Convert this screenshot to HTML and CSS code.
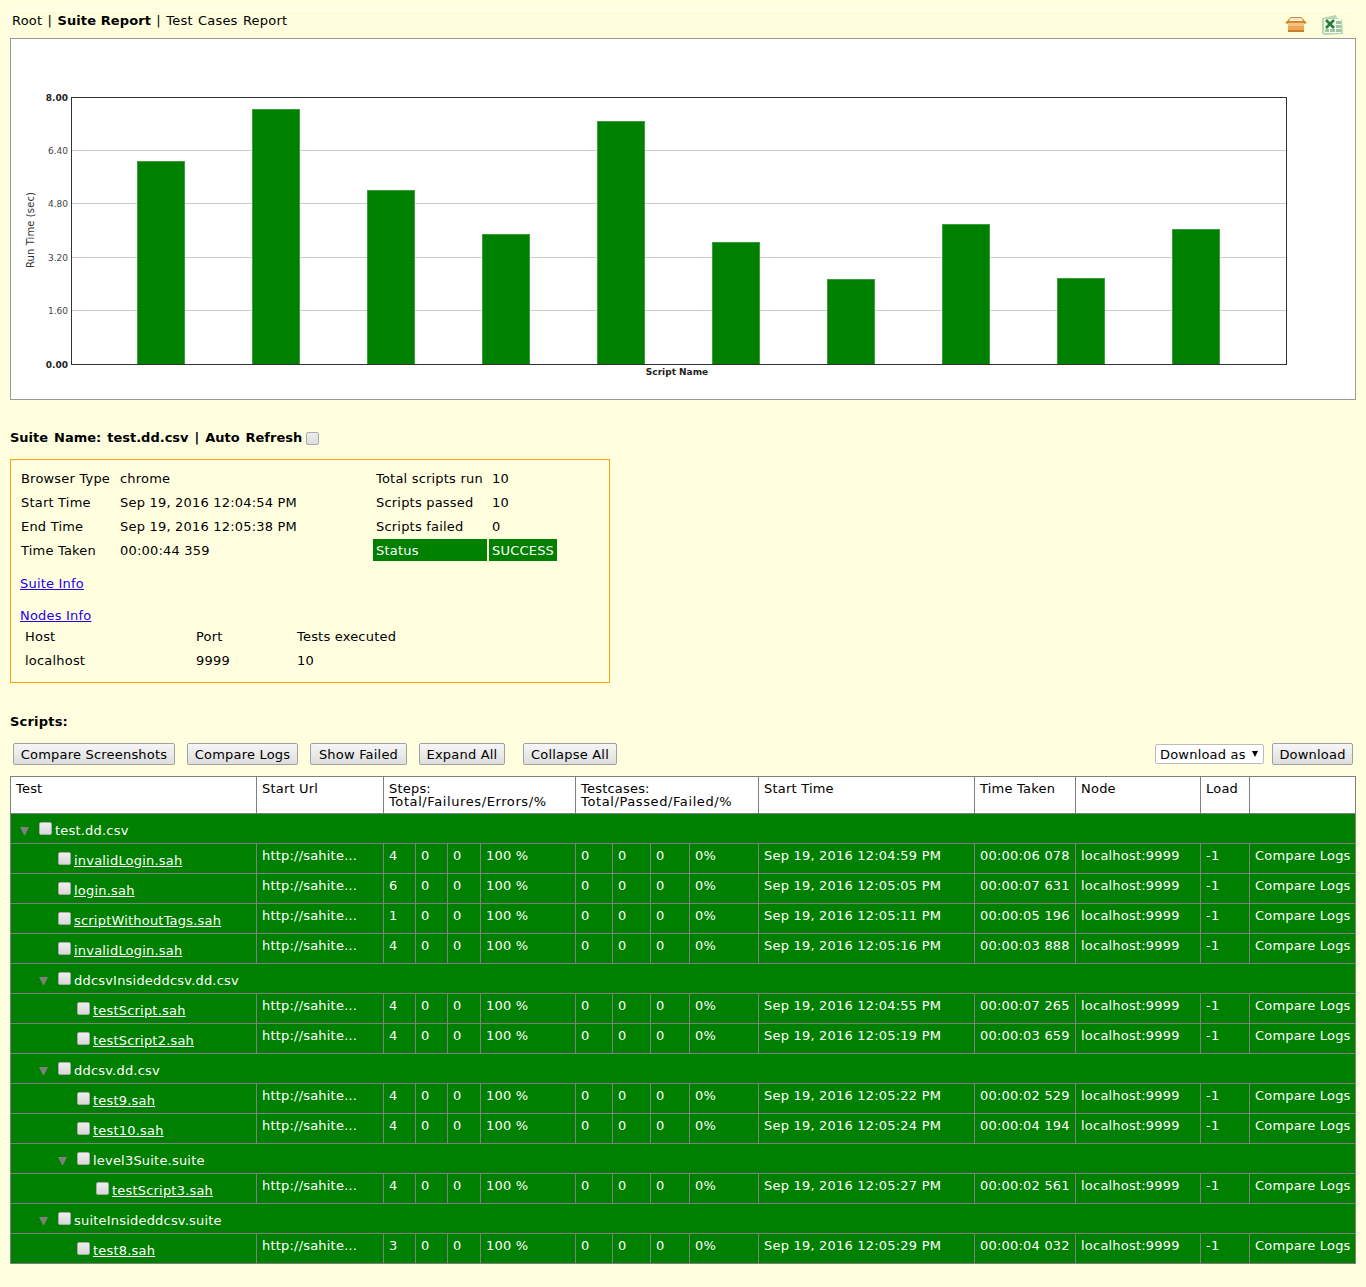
FILE: index.html
```html
<!DOCTYPE html>
<html lang="en">
<head>
  <meta charset="UTF-8">
  <title>Suite Report</title>
  <link rel="stylesheet" href="styles.css">
</head>
<body>

<div class="topbar">
  <div class="crumbs">Root | <b>Suite Report</b> | Test Cases Report</div>
  <div class="export-icons">
    <svg width="24" height="18" viewBox="0 0 24 18">
      <path d="M4 5 L1 8 L4 9 H20 L23 8 L20 5 L17 2 H7 Z" fill="#d08a2a"/>
      <path d="M7 3 H17 L19 6 H5 Z" fill="#f4ecd8"/>
      <rect x="4" y="8" width="16" height="9" rx="1" fill="#eda558"/>
      <rect x="4" y="8" width="16" height="3" fill="#f5c382"/>
      <rect x="4" y="15" width="16" height="2" fill="#c57f35"/>
    </svg>
    <svg width="22" height="20" viewBox="0 0 22 20">
      <path d="M1 3 L15 0 L16 3 L21 5 L22 19 L3 20 L1 18 Z" fill="#b7d5b2"/>
      <rect x="3" y="4" width="17" height="14" fill="#f4f9f2"/>
      <path d="M15 6 H20 V9 H15 Z M15 10 H20 V13 H15 Z M15 14 H20 V17 H15 Z M9 14 H14 V17 H9 Z M4 14 H8 V17 H4 Z" fill="#9cc79a"/>
      <path d="M5 5 L13 13 M13 5 L5 13" stroke="#2b7a35" stroke-width="2.6"/>
    </svg>
  </div>
</div>

<div class="chart-box">
  <svg class="chart" width="1344" height="360" viewBox="11 39 1344 360">
    <g class="grid">
      <line x1="72" x2="1286" y1="150.5" y2="150.5"/>
      <line x1="72" x2="1286" y1="203.5" y2="203.5"/>
      <line x1="72" x2="1286" y1="257.5" y2="257.5"/>
      <line x1="72" x2="1286" y1="310.5" y2="310.5"/>
    </g>
    <g class="bars">
      <rect x="137.5" y="161.5" width="47" height="203"/>
      <rect x="252.5" y="109.5" width="47" height="255"/>
      <rect x="367.5" y="190.5" width="47" height="174"/>
      <rect x="482.5" y="234.5" width="47" height="130"/>
      <rect x="597.5" y="121.5" width="47" height="243"/>
      <rect x="712.5" y="242.5" width="47" height="122"/>
      <rect x="827.5" y="279.5" width="47" height="85"/>
      <rect x="942.5" y="224.5" width="47" height="140"/>
      <rect x="1057.5" y="278.5" width="47" height="86"/>
      <rect x="1172.5" y="229.5" width="47" height="135"/>
    </g>
    <rect class="plot" x="71.5" y="97.5" width="1215" height="267"/>
    <g class="ticks">
      <text class="strong" x="68" y="101">8.00</text>
      <text x="68" y="154">6.40</text>
      <text x="68" y="207">4.80</text>
      <text x="68" y="261">3.20</text>
      <text x="68" y="314">1.60</text>
      <text class="strong" x="68" y="368">0.00</text>
    </g>
    <text class="y-title" transform="translate(34 230) rotate(-90)">Run Time (sec)</text>
    <text class="x-title" x="677" y="375">Script Name</text>
  </svg>
</div>

<h2 class="suite-name">Suite Name: test.dd.csv | Auto Refresh <input type="checkbox" class="check"></h2>

<div class="info-box">
  <div class="info-top">
    <table class="info-table run-table">
      <tr><td class="lbl">Browser Type</td><td>chrome</td></tr>
      <tr><td class="lbl">Start Time</td><td>Sep 19, 2016 12:04:54 PM</td></tr>
      <tr><td class="lbl">End Time</td><td>Sep 19, 2016 12:05:38 PM</td></tr>
      <tr><td class="lbl">Time Taken</td><td>00:00:44 359</td></tr>
    </table>
    <table class="info-table count-table">
      <tr><td class="lbl">Total scripts run</td><td>10</td></tr>
      <tr><td class="lbl">Scripts passed</td><td>10</td></tr>
      <tr><td class="lbl">Scripts failed</td><td>0</td></tr>
      <tr class="status"><td class="lbl">Status</td><td>SUCCESS</td></tr>
    </table>
  </div>
  <a class="info-link first" href="#">Suite Info</a>
  <a class="info-link" href="#">Nodes Info</a>
  <table class="info-table nodes-table">
    <tr><td class="host">Host</td><td class="port">Port</td><td>Tests executed</td></tr>
    <tr><td class="host">localhost</td><td class="port">9999</td><td>10</td></tr>
  </table>
</div>

<h2 class="scripts-title">Scripts:</h2>

<div class="toolbar">
  <div class="actions">
    <button class="btn-screens">Compare Screenshots</button>
    <button class="btn-logs">Compare Logs</button>
    <button class="btn-failed">Show Failed</button>
    <button class="btn-expand">Expand All</button>
    <button class="btn-collapse">Collapse All</button>
  </div>
  <div class="downloads">
    <div class="select-wrap"><select><option>Download as</option></select></div>
    <button class="btn-download">Download</button>
  </div>
</div>

<table class="report">
  <colgroup>
    <col class="c-test"><col class="c-url"><col class="c-n"><col class="c-n"><col class="c-n3"><col class="c-pct">
    <col class="c-t1"><col class="c-t2"><col class="c-t3"><col class="c-t4">
    <col class="c-start"><col class="c-taken"><col class="c-node"><col class="c-load"><col class="c-logs">
  </colgroup>
  <thead>
    <tr>
      <th>Test</th>
      <th>Start Url</th>
      <th colspan="4">Steps:<br><span class="fractions">Total/Failures/Errors/%</span></th>
      <th colspan="4">Testcases:<br><span class="fractions">Total/Passed/Failed/%</span></th>
      <th>Start Time</th>
      <th>Time Taken</th>
      <th>Node</th>
      <th>Load</th>
      <th></th>
    </tr>
  </thead>
  <tbody>
    <tr><td colspan="15" class="name"><span class="tree lvl-0"><i class="toggle"></i><input type="checkbox" class="check"><span>test.dd.csv</span></span></td></tr>
    <tr>
      <td class="name"><span class="tree lvl-1"><i class="spacer"></i><input type="checkbox" class="check"><a href="#">invalidLogin.sah</a></span></td>
      <td>http://sahite…</td><td>4</td><td>0</td><td>0</td><td>100 %</td><td>0</td><td>0</td><td>0</td><td>0%</td>
      <td>Sep 19, 2016 12:04:59 PM</td><td>00:00:06 078</td><td>localhost:9999</td><td>-1</td><td>Compare Logs</td>
    </tr>
    <tr>
      <td class="name"><span class="tree lvl-1"><i class="spacer"></i><input type="checkbox" class="check"><a href="#">login.sah</a></span></td>
      <td>http://sahite…</td><td>6</td><td>0</td><td>0</td><td>100 %</td><td>0</td><td>0</td><td>0</td><td>0%</td>
      <td>Sep 19, 2016 12:05:05 PM</td><td>00:00:07 631</td><td>localhost:9999</td><td>-1</td><td>Compare Logs</td>
    </tr>
    <tr>
      <td class="name"><span class="tree lvl-1"><i class="spacer"></i><input type="checkbox" class="check"><a href="#">scriptWithoutTags.sah</a></span></td>
      <td>http://sahite…</td><td>1</td><td>0</td><td>0</td><td>100 %</td><td>0</td><td>0</td><td>0</td><td>0%</td>
      <td>Sep 19, 2016 12:05:11 PM</td><td>00:00:05 196</td><td>localhost:9999</td><td>-1</td><td>Compare Logs</td>
    </tr>
    <tr>
      <td class="name"><span class="tree lvl-1"><i class="spacer"></i><input type="checkbox" class="check"><a href="#">invalidLogin.sah</a></span></td>
      <td>http://sahite…</td><td>4</td><td>0</td><td>0</td><td>100 %</td><td>0</td><td>0</td><td>0</td><td>0%</td>
      <td>Sep 19, 2016 12:05:16 PM</td><td>00:00:03 888</td><td>localhost:9999</td><td>-1</td><td>Compare Logs</td>
    </tr>
    <tr><td colspan="15" class="name"><span class="tree lvl-1"><i class="toggle"></i><input type="checkbox" class="check"><span>ddcsvInsideddcsv.dd.csv</span></span></td></tr>
    <tr>
      <td class="name"><span class="tree lvl-2"><i class="spacer"></i><input type="checkbox" class="check"><a href="#">testScript.sah</a></span></td>
      <td>http://sahite…</td><td>4</td><td>0</td><td>0</td><td>100 %</td><td>0</td><td>0</td><td>0</td><td>0%</td>
      <td>Sep 19, 2016 12:04:55 PM</td><td>00:00:07 265</td><td>localhost:9999</td><td>-1</td><td>Compare Logs</td>
    </tr>
    <tr>
      <td class="name"><span class="tree lvl-2"><i class="spacer"></i><input type="checkbox" class="check"><a href="#">testScript2.sah</a></span></td>
      <td>http://sahite…</td><td>4</td><td>0</td><td>0</td><td>100 %</td><td>0</td><td>0</td><td>0</td><td>0%</td>
      <td>Sep 19, 2016 12:05:19 PM</td><td>00:00:03 659</td><td>localhost:9999</td><td>-1</td><td>Compare Logs</td>
    </tr>
    <tr><td colspan="15" class="name"><span class="tree lvl-1"><i class="toggle"></i><input type="checkbox" class="check"><span>ddcsv.dd.csv</span></span></td></tr>
    <tr>
      <td class="name"><span class="tree lvl-2"><i class="spacer"></i><input type="checkbox" class="check"><a href="#">test9.sah</a></span></td>
      <td>http://sahite…</td><td>4</td><td>0</td><td>0</td><td>100 %</td><td>0</td><td>0</td><td>0</td><td>0%</td>
      <td>Sep 19, 2016 12:05:22 PM</td><td>00:00:02 529</td><td>localhost:9999</td><td>-1</td><td>Compare Logs</td>
    </tr>
    <tr>
      <td class="name"><span class="tree lvl-2"><i class="spacer"></i><input type="checkbox" class="check"><a href="#">test10.sah</a></span></td>
      <td>http://sahite…</td><td>4</td><td>0</td><td>0</td><td>100 %</td><td>0</td><td>0</td><td>0</td><td>0%</td>
      <td>Sep 19, 2016 12:05:24 PM</td><td>00:00:04 194</td><td>localhost:9999</td><td>-1</td><td>Compare Logs</td>
    </tr>
    <tr><td colspan="15" class="name"><span class="tree lvl-2"><i class="toggle"></i><input type="checkbox" class="check"><span>level3Suite.suite</span></span></td></tr>
    <tr>
      <td class="name"><span class="tree lvl-3"><i class="spacer"></i><input type="checkbox" class="check"><a href="#">testScript3.sah</a></span></td>
      <td>http://sahite…</td><td>4</td><td>0</td><td>0</td><td>100 %</td><td>0</td><td>0</td><td>0</td><td>0%</td>
      <td>Sep 19, 2016 12:05:27 PM</td><td>00:00:02 561</td><td>localhost:9999</td><td>-1</td><td>Compare Logs</td>
    </tr>
    <tr><td colspan="15" class="name"><span class="tree lvl-1"><i class="toggle"></i><input type="checkbox" class="check"><span>suiteInsideddcsv.suite</span></span></td></tr>
    <tr>
      <td class="name"><span class="tree lvl-2"><i class="spacer"></i><input type="checkbox" class="check"><a href="#">test8.sah</a></span></td>
      <td>http://sahite…</td><td>3</td><td>0</td><td>0</td><td>100 %</td><td>0</td><td>0</td><td>0</td><td>0%</td>
      <td>Sep 19, 2016 12:05:29 PM</td><td>00:00:04 032</td><td>localhost:9999</td><td>-1</td><td>Compare Logs</td>
    </tr>
  </tbody>
</table>

</body>
</html>
```

FILE: styles.css
```css
/* Page */
* { box-sizing: border-box; }
body { margin: 0; padding: 10px 10px 23px; background-color: #ffffe0; color: #000; font-family: "DejaVu Sans", Verdana, sans-serif; font-size: 13px; line-height: 16px; letter-spacing: 0.2px; }

/* Top bar */
.topbar { display: flex; justify-content: space-between; height: 28px; background-color: #fefedc; border-top: 1px solid #fff; border-left: 1px solid #fff; }
.crumbs { padding: 2px 0 0 1px; word-spacing: 1px; }
.crumbs b { letter-spacing: 0.1px; word-spacing: 0; }
.export-icons { display: flex; align-items: flex-start; gap: 13px; padding: 4px 13px 0 0; }

/* Chart */
.chart-box { height: 362px; background-color: #fff; border: 1px solid #999; }
.chart { display: block; font-family: "DejaVu Sans", Verdana, sans-serif; letter-spacing: 0; }
.grid line { stroke: #ccc; stroke-width: 1; }
.bars rect { fill: #008000; stroke: #3d9e3d; stroke-width: 1; }
.plot { fill: none; stroke: #333; stroke-width: 1; }
.ticks text { font-size: 9px; text-anchor: end; fill: #444; }
.ticks .strong { font-weight: bold; fill: #222; }
.y-title { font-size: 10px; letter-spacing: 0.1px; text-anchor: middle; fill: #333; }
.x-title { font-size: 9px; font-weight: bold; text-anchor: middle; fill: #222; }

/* Headings */
.suite-name, .scripts-title { margin: 0; font-size: 13px; line-height: 16px; font-weight: bold; }
.suite-name { margin-top: 30px; margin-bottom: 13px; letter-spacing: 0; word-spacing: 1.4px; }
.suite-name .check { margin-left: -2px; }
.scripts-title { margin-top: 31px; margin-bottom: 13px; }

.check { appearance: none; -webkit-appearance: none; display: inline-block; width: 13px; height: 13px; margin: 0; vertical-align: -3px; background: linear-gradient(#ededed, #dcdcdc); border: 1px solid #aaa; border-radius: 2px; }

/* Suite info */
.info-box { width: 600px; height: 224px; padding: 5px 5px 0; border: 1px solid #ffa500; }
.info-top { display: flex; }
.info-table { border-collapse: separate; border-spacing: 2px; }
.info-table td { height: 22px; padding: 4px 3px 2px; white-space: nowrap; }
.run-table { width: 355px; }
.run-table .lbl { width: 97px; }
.run-table td { padding-right: 0; }
.count-table .lbl { width: 114px; }
.status td { background-color: #008000; color: #fff; }
.info-link { display: block; width: max-content; margin: 16px 0 0 4px; color: #2200ee; }
.info-link.first { margin-top: 13px; }
.nodes-table { margin: -1px 0 0 4px; }
.nodes-table .host { width: 169px; }
.nodes-table .port { width: 99px; }

/* Buttons */
.toolbar { display: flex; justify-content: space-between; height: 22px; margin-bottom: 11px; padding: 0 3px; }
.actions, .downloads { display: flex; align-items: center; gap: 12px; }
.downloads { gap: 8px; }
button { height: 22px; padding: 0; font-family: inherit; font-size: 13px; letter-spacing: inherit; color: #000; background: linear-gradient(#f6f6f6, #dedede); border: 1px solid #a0a0a0; border-radius: 2px; }
.btn-screens { width: 162px; }
.btn-logs { width: 111px; }
.btn-failed { width: 97px; }
.btn-expand { width: 86px; }
.btn-collapse { width: 94px; margin-left: 6px; }
.btn-download { width: 81px; }
.select-wrap { position: relative; width: 109px; height: 20px; }
.select-wrap::after { content: ""; position: absolute; top: 7px; right: 6px; border-top: 6px solid #000; border-left: 3px solid transparent; border-right: 3px solid transparent; }
select { appearance: none; -webkit-appearance: none; width: 100%; height: 20px; padding: 0 4px; font-family: inherit; font-size: 13px; letter-spacing: inherit; color: #000; background-color: #fff; border: 1px solid #bbb; border-radius: 2px; }

/* Report table */
.report { width: 1346px; table-layout: fixed; border-collapse: collapse; line-height: 13px; }
.c-test { width: 246px; }
.c-url { width: 127px; }
.c-n { width: 32px; }
.c-n3 { width: 33px; }
.c-pct { width: 95px; }
.c-t1 { width: 37px; }
.c-t2 { width: 38px; }
.c-t3 { width: 39px; }
.c-t4 { width: 69px; }
.c-start { width: 216px; }
.c-taken { width: 101px; }
.c-node { width: 125px; }
.c-load { width: 49px; }
.c-logs { width: 106px; }
.report th, .report td { padding: 0 5px; text-align: left; vertical-align: top; border: 1px solid #808080; white-space: nowrap; overflow: hidden; }
.report th { height: 37px; padding-top: 5px; font-weight: normal; background-color: #fff; }
.report td { height: 30px; padding-top: 5px; background-color: #008000; color: #fff; }
.report td.name { padding-top: 0; }
.fractions { letter-spacing: 0.6px; }

/* Tree */
.tree { display: flex; height: 29px; padding-top: 8px; }
.lvl-0 { padding-left: 4px; }
.lvl-1 { padding-left: 23px; }
.lvl-2 { padding-left: 42px; }
.lvl-3 { padding-left: 61px; }
.toggle { flex: none; width: 9px; height: 0; margin: 5px 10px 0 0; border-top: 8px solid #808080; border-left: 4.5px solid transparent; border-right: 4.5px solid transparent; }
.spacer { flex: none; width: 19px; }
.tree .check { flex: none; margin-right: 3px; background: linear-gradient(#eee, #d8d8d8); }
.tree a, .tree span { color: #fff; margin-top: 1px; line-height: 15px; }
```
